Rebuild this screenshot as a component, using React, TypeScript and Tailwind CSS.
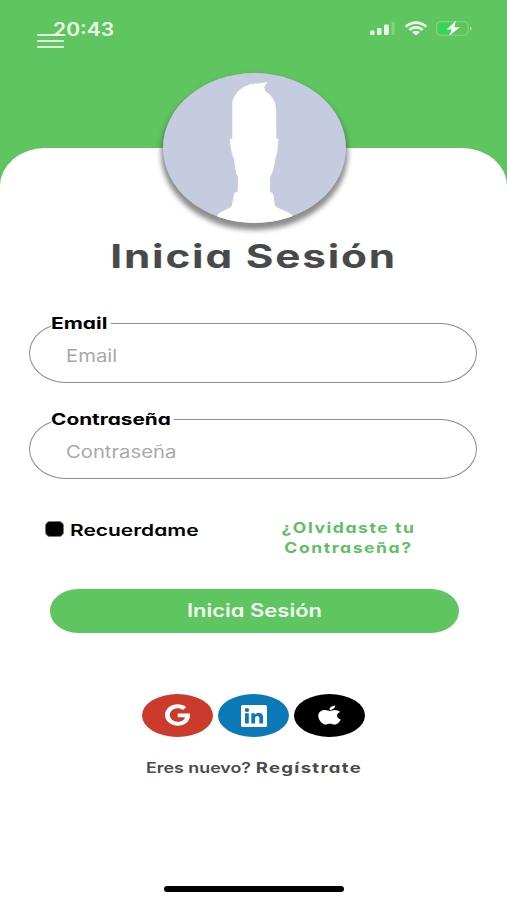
import { FaApple, FaGoogle } from "react-icons/fa";
import type { ReactNode } from "react";

function StatusIcons() {
	return (
		<svg width="104" height="18" viewBox="0 0 104 18" className="block" aria-hidden>
			{/* Signal */}
			<rect x="1" y="10.5" width="4.5" height="4.5" rx="1.2" fill="#e9fbe6" />
			<rect x="8" y="8" width="4.5" height="7" rx="1.2" fill="#e9fbe6" />
			<rect x="15" y="4.5" width="4.8" height="10.5" rx="1.2" fill="#e9fbe6" />
			<rect x="22.5" y="2" width="3.2" height="13" rx="1" fill="#82d481" />
			{/* Wifi */}
			<g fill="none" stroke="#effced" strokeWidth="2.8">
				<path d="M36.8 6.800C42.500 1.100 51.500 1.100 57.200 6.800" />
				<path d="M40.300 10C44.200 6.400 49.800 6.400 53.700 10" />
			</g>
			<path d="M43 12c2.400-1.800 5.600-1.800 8 0L47 15.200Z" fill="#effced" />
			{/* Battery */}
			<rect x="67.600" y="1.800" width="31.500" height="13.500" rx="4" fill="none" stroke="#84d682" strokeWidth="1.100" />
			<path d="M72 3.500h12v10H72a2.500 2.500 0 0 1-2.500-2.500V6A2.500 2.500 0 0 1 72 3.500Z" fill="#35d45d" />
			<path d="M101 6.500c2.200.5 2.200 3.500 0 4Z" fill="#a5e4a2" />
			<path d="M87 .8 77.500 9.500h5.200L80 15.800l11-8.600h-5.700Z" fill="#f5fff3" />
		</svg>
	);
}

function LinkedinIcon() {
	return (
		<svg width="26" height="22" viewBox="0 0 26 22" aria-hidden>
			<rect width="26" height="22" rx="1.500" fill="#fff" />
			<g fill="#0b78b8">
				<ellipse cx="5.900" cy="5" rx="2.200" ry="1.900" />
				<path d="M4 8.300h3.800V18.500H4ZM10.300 8.300h3.600v1.400c.7-1 2-1.700 3.700-1.700 3.600 0 4.500 2 4.500 5v5.500h-3.800v-5c0-1.500-.2-2.600-1.900-2.600-1.800 0-2.300 1.200-2.300 2.700v4.900h-3.800Z" />
			</g>
		</svg>
	);
}

function Avatar() {
	return (
		<div className="h-[150px] w-[183px] overflow-hidden rounded-[50%] bg-[#c5cce0] shadow-[0_5px_5px_2px_rgba(80,80,80,0.65)]">
			<svg width="183" height="150" viewBox="0 0 183 150" aria-hidden>
				<path
					fill="#fff"
					d="M50 150 55.300 141C60 137 65 137 68.700 133L71.300 120 74.700 118.500 75 104.500C72 99 72 92 71 86 69 82 67.500 76 67 66L69.300 65.300V29.300C71 21 78 14 85.300 12 91 10 98 11 104.300 8.800L101.300 14 102 18C108 22 111 26 112.300 31L113.300 39V65.300L115.300 66C115 74 114.500 81 112.500 85 112 92 110 99 107 104.500V118.500L110.300 121 112 132.700C117 137 123 137 128.700 141.700L134 150Z"
				/>
			</svg>
		</div>
	);
}

type FieldProps = {
	label: ReactNode;
	placeholder: string;
};

function Field({ label, placeholder }: FieldProps) {
	return (
		<div className="relative flex h-[60px] items-center rounded-[37px/30px] border-[1.5px] border-[#8c8c8c] pl-9">
			<span className="absolute -top-[13px] left-[21px] flex h-6 items-center bg-white">{label}</span>
			<span className="origin-left scale-x-[1.19] pt-[7px] text-[17px] text-[#a9a9a9] [font-feature-settings:normal]">
				{placeholder}
			</span>
		</div>
	);
}

function SocialButton({ className, children }: { className: string; children: ReactNode }) {
	return (
		<button className={`flex h-[43px] w-[71px] items-center justify-center rounded-[50%] text-white ${className}`}>
			{children}
		</button>
	);
}

export default function App() {
	return (
		<div className="flex h-[900px] w-full flex-col overflow-hidden bg-[#5fc560] font-['Inter','Liberation_Sans',sans-serif] whitespace-nowrap">
			<header className="flex h-[148px] shrink-0 items-start justify-between pr-[34px] pl-[37px]">
				<div className="relative pt-[33px]">
					<div className="flex w-[27px] flex-col gap-1 pt-[1px]">
						<i className="h-[2px] rounded bg-[#dff6dc]" />
						<i className="h-[2px] rounded bg-[#dff6dc]" />
						<i className="h-[2px] rounded bg-[#dff6dc]" />
					</div>
					<span className="absolute top-[15px] left-4 origin-left scale-x-[1.14] text-[18.500px] leading-7 font-semibold text-[#e9fbe6]">
						20:43
					</span>
				</div>
				<div className="pt-5">
					<StatusIcons />
				</div>
			</header>

			<main className="flex flex-1 flex-col items-center rounded-t-[45px_38px] bg-white [font-feature-settings:'cv11']">
				<div className="-mt-[75px] ml-px">
					<Avatar />
				</div>
				<h1 className="mt-[14px] scale-x-[1.32] text-[32px] leading-10 font-bold tracking-[1.400px] text-[#47494b]">
					Inicia Sesión
				</h1>

				<div className="mt-[46px] -ml-px flex w-[448px] flex-col gap-9">
					<Field
						label={<b className="block w-[60px] origin-left scale-x-[1.31] text-[16px]">Email</b>}
						placeholder="Email"
					/>
					<Field
						label={<b className="block w-[123px] origin-left scale-x-[1.3] text-[16px]">Contraseña</b>}
						placeholder="Contraseña"
					/>
				</div>

				<div className="mt-9 flex w-full justify-between pr-[91px] pl-[45px]">
					<label className="flex h-7 items-center gap-[6px]">
						<span className="h-4 w-[19px] rounded-[5px] border border-[#777] bg-black" />
						<span className="origin-left scale-x-[1.31] pt-px text-[16px] font-semibold">Recuerdame</span>
					</label>
					<a className="w-[135px] pt-[3px] text-center text-[14.500px] leading-5 font-bold tracking-[1.300px] text-[#5fbf63]">
						<span className="block scale-x-[1.21]">¿Olvidaste tu</span>
						<span className="block scale-x-[1.21]">Contraseña?</span>
					</a>
				</div>

				<button className="mt-[31px] ml-px h-11 w-[409px] rounded-[28px/22px] bg-[#5fc560] pb-0.5 text-[18px] font-semibold text-[#f3fdf1]">
					<span className="block scale-x-[1.22]">Inicia Sesión</span>
				</button>

				<div className="mt-[61px] flex gap-[5px]">
					<SocialButton className="bg-[#cb3a2b]">
						<FaGoogle className="mb-px h-[22px] w-[25px]" preserveAspectRatio="none" />
					</SocialButton>
					<SocialButton className="bg-[#0b78b8]">
						<LinkedinIcon />
					</SocialButton>
					<SocialButton className="bg-black">
						<FaApple className="mb-px h-[22px] w-[23px]" preserveAspectRatio="none" />
					</SocialButton>
				</div>

				<p className="mt-5 flex w-[216px] justify-between pt-px text-[14.500px] leading-5 text-[#4b4b4b]">
					<span className="origin-left scale-x-[1.23] font-semibold">Eres nuevo?</span>
					<b className="origin-right translate-x-px scale-x-[1.28] tracking-[1px]">Regístrate</b>
				</p>

				<div className="mt-auto mb-2 h-[6px] w-[180px] rounded-full bg-black" />
			</main>
		</div>
	);
}
